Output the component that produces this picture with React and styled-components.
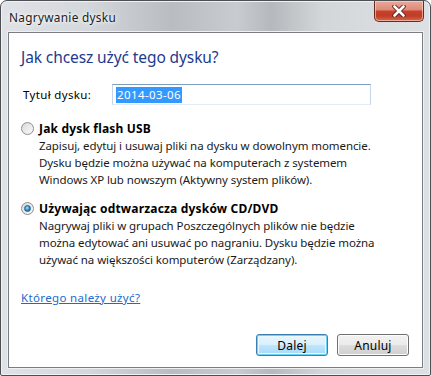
import React from "react";
import styled, { createGlobalStyle } from "styled-components";

const Global = createGlobalStyle`
  html, body { margin: 0; padding: 0; background: #ffffff; }
  body { font-family: "Noto Sans", "Open Sans", sans-serif; }
  * { box-sizing: border-box; }
`;

const Window = styled.div`
  width: 431px;
  height: 376px;
  border: 1px solid #4d4f52;
  border-radius: 7px 7px 2px 2px;
  background: linear-gradient(90deg, #dfe3e7 0%, #d4d8dc 20%, #b9bdc1 40%, #c8ccd0 55%, #b5b9bd 63%, #d3d7da 75%, #dde1e4 100%);
  box-shadow: inset 0 0 0 1px #f0f2f4;
  display: flex;
  flex-direction: column;
  padding: 0 7px 7px 7px;
  font-family: "Noto Sans", sans-serif;
  letter-spacing: -0.08px;
`;

const TitleBar = styled.div`
  height: 31px;
  display: flex;
  align-items: flex-start;
  justify-content: space-between;
`;

const Title = styled.div`
  font-size: 11.8px;
  letter-spacing: 0.3px;
  color: #1b1b1b;
  padding: 8px 0 0 1px;
  text-shadow: 0 0 6px #ffffff, 0 0 3px #ffffff;
`;

const CloseButton = styled.div`
  width: 50px;
  height: 21px;
  margin-right: -1px;
  border: 1px solid #6b2a20;
  border-top: none;
  border-radius: 0 0 5px 5px;
  background: linear-gradient(180deg, #e9a99b 0%, #dc8a78 45%, #c7412c 50%, #c13d27 75%, #d46a4e 100%);
  box-shadow: inset 0 0 0 1px rgba(255, 220, 210, 0.6);
  display: flex;
  align-items: center;
  justify-content: center;
`;

const Client = styled.div`
  flex: 1;
  background: #ffffff;
  border: 1px solid #7a7e83;
  box-shadow: 0 0 0 1px #eef1f3;
  display: flex;
  flex-direction: column;
  padding: 14px 12px 11px 12px;
`;

const Heading = styled.div`
  font-size: 15.5px;
  letter-spacing: -0.1px;
  color: #1e3a8e;
  line-height: 21px;
  margin-bottom: 16px;
`;

const TitleRow = styled.div`
  display: flex;
  align-items: center;
  padding-left: 2px;
  margin-bottom: 15px;
`;

const Label = styled.div`
  font-size: 11.5px;
  letter-spacing: 0.35px;
  color: #000;
  width: 89px;
`;

const TextInput = styled.div`
  width: 259px;
  height: 21px;
  border: 1px solid #c6d6e8;
  border-top-color: #7f9dbf;
  border-bottom-color: #e3ebf4;
  display: flex;
  align-items: center;
  padding-left: 3px;
`;

const Selected = styled.span`
  background: #3399ff;
  color: #ffffff;
  font-size: 11.5px;
  letter-spacing: 0.4px;
  line-height: 16px;
  padding: 0 1px;
`;

const Option = styled.div`
  display: grid;
  grid-template-columns: 18px 1fr;
  margin-bottom: ${(p) => p.$gap}px;
`;

const RadioOuter = styled.div`
  width: 13px;
  height: 13px;
  margin-top: 2px;
  border-radius: 50%;
  border: 1px solid #8e8f8f;
  background: linear-gradient(135deg, #d9d9d9 0%, #ededed 60%, #f9f9f9 100%);
  display: flex;
  align-items: center;
  justify-content: center;
`;

const RadioDot = styled.div`
  width: 7px;
  height: 7px;
  border-radius: 50%;
  background: radial-gradient(circle at 40% 35%, #a8dcf5 0%, #2b8ed2 55%, #14548a 100%);
  border: 1px solid #1d5e8e;
`;

const OptionTitle = styled.div`
  font-size: 12px;
  letter-spacing: 0.18px;
  font-weight: 700;
  color: #000;
  line-height: 17px;
`;

const OptionDesc = styled.div`
  font-size: 11.5px;
  color: #1a1a1a;
  line-height: 17px;
  grid-column: 2;
`;

const Link = styled.a`
  font-size: 11.5px;
  letter-spacing: 0.35px;
  color: #1a6ad0;
  text-decoration: underline;
  line-height: 17px;
  align-self: flex-start;
`;

const Footer = styled.div`
  margin-top: auto;
  display: flex;
  justify-content: flex-end;
  gap: 9px;
  padding-right: 1px;
`;

const Button = styled.div`
  width: 72px;
  height: 22px;
  border-radius: 3px;
  border: 1px solid ${(p) => (p.$default ? "#3c7fb1" : "#707070")};
  background: ${(p) =>
    p.$default
      ? "linear-gradient(180deg, #eaf6fd 0%, #d9f0fc 50%, #bee6fd 50%, #a7d9f5 100%)"
      : "linear-gradient(180deg, #f2f2f2 0%, #ebebeb 50%, #dddddd 50%, #cfcfcf 100%)"};
  box-shadow: ${(p) =>
    p.$default ? "inset 0 0 0 1px #6fd0f5, inset 0 0 0 2px #e9f8ff" : "inset 0 0 0 1px #fcfcfc"};
  font-size: 12px;
  letter-spacing: 0.2px;
  color: #000;
  display: flex;
  align-items: center;
  justify-content: center;
`;

export default function App() {
  return (
    <>
      <Global />
      <Window>
        <TitleBar>
          <Title>Nagrywanie dysku</Title>
          <CloseButton>
            <svg width="14" height="12" viewBox="0 0 14 12">
              <path
                d="M2.5 1.5 L11.5 10.5 M11.5 1.5 L2.5 10.5"
                stroke="#5b1c12"
                strokeWidth="4.4"
                strokeLinecap="round"
                fill="none"
              />
              <path
                d="M2.5 1.5 L11.5 10.5 M11.5 1.5 L2.5 10.5"
                stroke="#ffffff"
                strokeWidth="2.6"
                strokeLinecap="round"
                fill="none"
              />
            </svg>
          </CloseButton>
        </TitleBar>
        <Client>
          <Heading>Jak chcesz użyć tego dysku?</Heading>
          <TitleRow>
            <Label>Tytuł dysku:</Label>
            <TextInput>
              <Selected>2014-03-06</Selected>
            </TextInput>
          </TitleRow>
          <Option $gap={12}>
            <RadioOuter />
            <OptionTitle>Jak dysk flash USB</OptionTitle>
            <OptionDesc>
              Zapisuj, edytuj i usuwaj pliki na dysku w dowolnym momencie.
              <br />
              Dysku będzie można używać na komputerach z systemem
              <br />
              Windows XP lub nowszym (Aktywny system plików).
            </OptionDesc>
          </Option>
          <Option $gap={21}>
            <RadioOuter>
              <RadioDot />
            </RadioOuter>
            <OptionTitle>Używając odtwarzacza dysków CD/DVD</OptionTitle>
            <OptionDesc>
              Nagrywaj pliki w grupach Poszczególnych plików nie będzie
              <br />
              można edytować ani usuwać po nagraniu. Dysku będzie można
              <br />
              używać na większości komputerów (Zarządzany).
            </OptionDesc>
          </Option>
          <Link>Którego należy użyć?</Link>
          <Footer>
            <Button $default>Dalej</Button>
            <Button>Anuluj</Button>
          </Footer>
        </Client>
      </Window>
    </>
  );
}
